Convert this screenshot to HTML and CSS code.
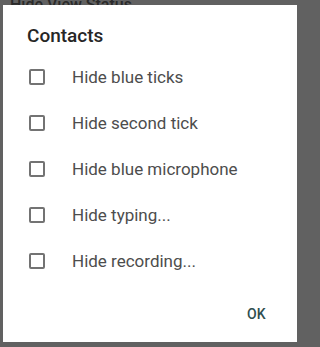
FILE: index.html
```html
<!DOCTYPE html>
<html>
<head>
<meta charset="utf-8">
<link rel="stylesheet" href="styles.css">
</head>
<body>
<div class="behind"><span class="behind-text">Hide View Status</span></div>
<div class="dialog">
  <div class="title">Contacts</div>
  <div class="list">
    <div class="row"><span class="box"></span><span class="label">Hide blue ticks</span></div>
    <div class="row"><span class="box"></span><span class="label">Hide second tick</span></div>
    <div class="row"><span class="box"></span><span class="label">Hide blue microphone</span></div>
    <div class="row"><span class="box"></span><span class="label">Hide typing...</span></div>
    <div class="row"><span class="box"></span><span class="label">Hide recording...</span></div>
  </div>
  <div class="footer"><span class="ok">OK</span></div>
</div>
</body>
</html>
```
FILE: styles.css
```css
html, body {
  margin: 0;
  padding: 0;
}
body {
  background: #616161;
  font-family: Roboto, "Noto Sans", sans-serif;
  width: 300px;
  height: 347px;
  overflow: hidden;
  padding: 0 3px;
  box-sizing: border-box;
}
.behind {
  height: 5px;
  overflow: hidden;
  position: relative;
}
.behind-text {
  position: absolute;
  left: 7px;
  bottom: -10px;
  font-size: 16px;
  font-weight: 500;
  color: #2a2a2a;
  line-height: 20px;
}
.dialog {
  background: #ffffff;
  height: 337px;
  box-sizing: border-box;
  padding: 19px 0 0 0;
  display: flex;
  flex-direction: column;
}
.title {
  font-size: 19px;
  font-weight: 500;
  line-height: 24px;
  color: #262626;
  padding-left: 24px;
}
.list {
  margin-top: 6px;
  display: flex;
  flex-direction: column;
}
.row {
  height: 46px;
  display: flex;
  align-items: center;
  padding-left: 26px;
}
.box {
  width: 16px;
  height: 16px;
  box-sizing: border-box;
  border: 2px solid #737373;
  border-radius: 2px;
  flex: none;
}
.label {
  margin-left: 27px;
  font-size: 17px;
  color: #4d4d4d;
}
.footer {
  display: flex;
  justify-content: flex-end;
  padding: 20px 31px 0 0;
}
.ok {
  font-size: 14px;
  font-weight: 500;
  line-height: 20px;
  color: #2f4f4f;
  letter-spacing: 0.3px;
}
```
